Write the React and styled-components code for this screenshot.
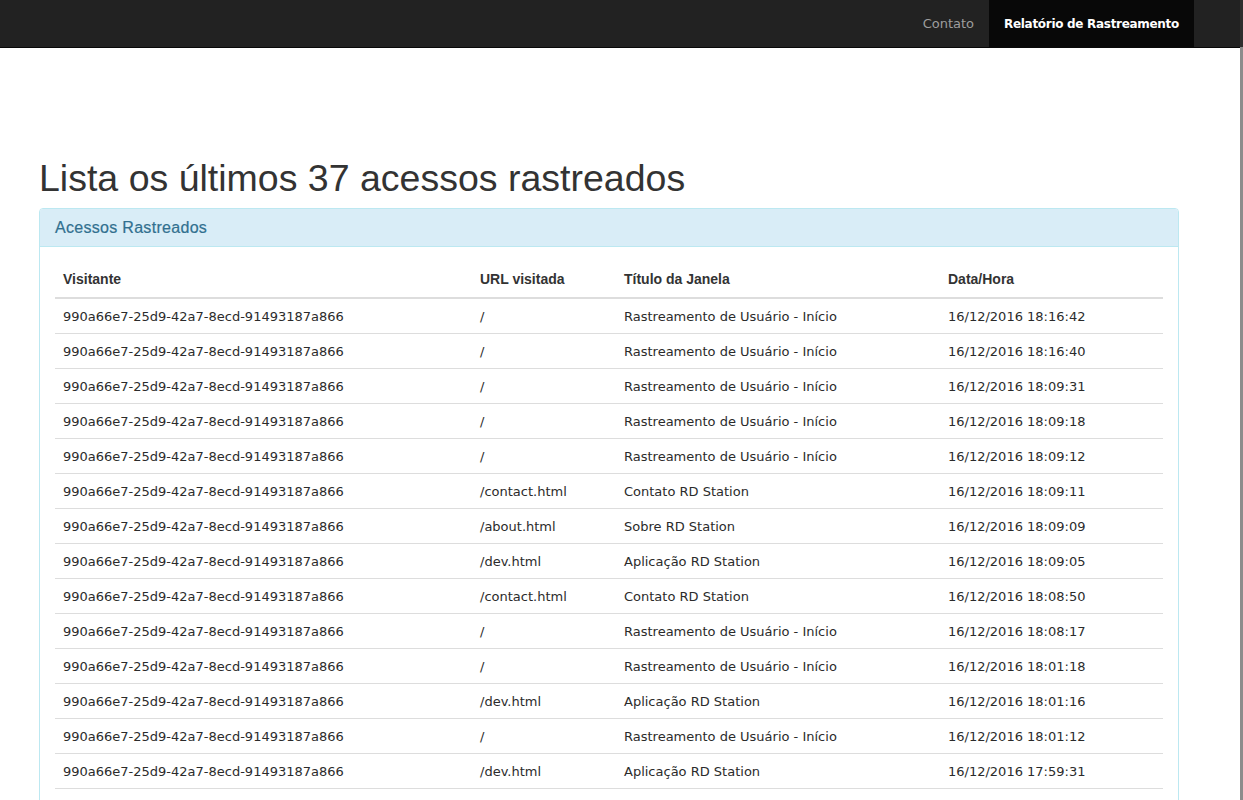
import React from "react";
import styled, { createGlobalStyle } from "styled-components";

const GlobalStyle = createGlobalStyle`
  html, body {
    margin: 0;
    padding: 0;
    background: #fff;
  }
  body {
    font-family: "DejaVu Sans", Verdana, sans-serif;
    font-size: 13px;
    color: #333;
    overflow: hidden;
  }
`;

const visitor = "990a66e7-25d9-42a7-8ecd-91493187a866";

const accesses = [
  { url: "/", title: "Rastreamento de Usuário - Início", date: "16/12/2016 18:16:42" },
  { url: "/", title: "Rastreamento de Usuário - Início", date: "16/12/2016 18:16:40" },
  { url: "/", title: "Rastreamento de Usuário - Início", date: "16/12/2016 18:09:31" },
  { url: "/", title: "Rastreamento de Usuário - Início", date: "16/12/2016 18:09:18" },
  { url: "/", title: "Rastreamento de Usuário - Início", date: "16/12/2016 18:09:12" },
  { url: "/contact.html", title: "Contato RD Station", date: "16/12/2016 18:09:11" },
  { url: "/about.html", title: "Sobre RD Station", date: "16/12/2016 18:09:09" },
  { url: "/dev.html", title: "Aplicação RD Station", date: "16/12/2016 18:09:05" },
  { url: "/contact.html", title: "Contato RD Station", date: "16/12/2016 18:08:50" },
  { url: "/", title: "Rastreamento de Usuário - Início", date: "16/12/2016 18:08:17" },
  { url: "/", title: "Rastreamento de Usuário - Início", date: "16/12/2016 18:01:18" },
  { url: "/dev.html", title: "Aplicação RD Station", date: "16/12/2016 18:01:16" },
  { url: "/", title: "Rastreamento de Usuário - Início", date: "16/12/2016 18:01:12" },
  { url: "/dev.html", title: "Aplicação RD Station", date: "16/12/2016 17:59:31" },
  { url: "/", title: "Rastreamento de Usuário - Início", date: "16/12/2016 17:59:20" },
];

const Navbar = styled.nav`
  background: #222;
  border-bottom: 1px solid #080808;
  height: 47px;
`;

const Container = styled.div`
  width: 1140px;
  padding: 0 15px;
  margin-left: 24px;
`;

const NavInner = styled(Container)`
  display: flex;
  justify-content: flex-end;
  height: 100%;
`;

const NavList = styled.ul`
  display: flex;
  list-style: none;
  margin: 0 -15px 0 0;
  padding: 0;
`;

const NavLink = styled.a`
  display: flex;
  align-items: center;
  height: 47px;
  padding: 0 15px;
  text-decoration: none;
  background: ${(p) => (p.$active ? "#080808" : "transparent")};
  color: ${(p) => (p.$active ? "#fff" : "#9d9d9d")};
  font-weight: ${(p) => (p.$active ? 700 : 400)};
  font-size: ${(p) => (p.$active ? "12px" : "13px")};
  letter-spacing: ${(p) => (p.$active ? "-0.3px" : "0")};
`;

const ScrollStrip = styled.div`
  position: fixed;
  top: 0;
  right: 0;
  width: 3px;
  height: 100vh;
  background: linear-gradient(#2e2e2e 0 47px, #8c8c8c 47px);
`;

const Main = styled(Container)`
  padding-top: 90px;
`;

const Title = styled.h1`
  font-family: "Liberation Sans", Arial, sans-serif;
  font-weight: 500;
  font-size: 37.5px;
  line-height: 1.1;
  margin: 20px 0 9px;
  color: #333;
`;

const Panel = styled.div`
  border: 1px solid #bce8f1;
  border-radius: 4px;
  background: #fff;
`;

const PanelHeading = styled.div`
  background: #d9edf7;
  border-bottom: 1px solid #bce8f1;
  border-radius: 3px 3px 0 0;
  padding: 10px 15px;
  color: #31708f;
  font-family: "Liberation Sans", Arial, sans-serif;
  font-size: 16px;
  line-height: 17px;
  letter-spacing: 0.3px;
  -webkit-text-stroke: 0.2px #31708f;
`;

const PanelBody = styled.div`
  padding: 15px;
`;

const Table = styled.table`
  width: 100%;
  border-collapse: collapse;
  border-spacing: 0;
  table-layout: fixed;
`;

const Th = styled.th`
  box-sizing: border-box;
  width: ${(p) => p.$w}px;
  text-align: left;
  padding: 8px;
  line-height: 19px;
  font-family: "Liberation Sans", Arial, sans-serif;
  font-size: 14px;
  font-weight: 700;
  color: #333;
  border-bottom: 2px solid #ddd;
`;

const Td = styled.td`
  padding: 9px 8px 7px;
  line-height: 18px;
  font-size: 13px;
  color: #2b2b2b;
  white-space: nowrap;
  border-top: 1px solid #ddd;

  tr:first-child > & {
    border-top: 0;
  }
`;

export default function App() {
  return (
    <>
      <GlobalStyle />
      <Navbar>
        <NavInner>
          <NavList>
            <li>
              <NavLink href="#">Contato</NavLink>
            </li>
            <li>
              <NavLink href="#" $active>
                Relatório de Rastreamento
              </NavLink>
            </li>
          </NavList>
        </NavInner>
      </Navbar>
      <Main>
        <Title>Lista os últimos 37 acessos rastreados</Title>
        <Panel>
          <PanelHeading>Acessos Rastreados</PanelHeading>
          <PanelBody>
            <Table>
              <thead>
                <tr>
                  <Th $w={417}>Visitante</Th>
                  <Th $w={144}>URL visitada</Th>
                  <Th $w={324}>Título da Janela</Th>
                  <Th $w={223}>Data/Hora</Th>
                </tr>
              </thead>
              <tbody>
                {accesses.map((a, i) => (
                  <tr key={i}>
                    <Td>{visitor}</Td>
                    <Td>{a.url}</Td>
                    <Td>{a.title}</Td>
                    <Td>{a.date}</Td>
                  </tr>
                ))}
              </tbody>
            </Table>
          </PanelBody>
        </Panel>
      </Main>
      <ScrollStrip />
    </>
  );
}
